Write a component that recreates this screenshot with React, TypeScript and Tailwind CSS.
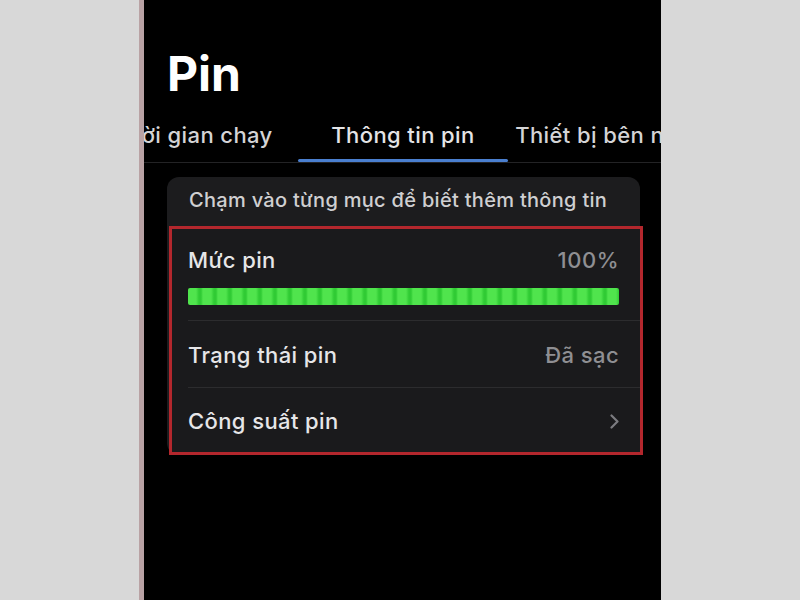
import React from "react";

const font = { fontFamily: 'Inter, "Noto Sans", "DejaVu Sans", sans-serif' };

function Chevron() {
  return (
    <svg width="9" height="15" viewBox="0 0 9 15" fill="none">
      <path d="M1.5 1.5l6 6-6 6" stroke="#7c7c80" strokeWidth="2.2" strokeLinecap="round" strokeLinejoin="round" />
    </svg>
  );
}

export default function App() {
  return (
    <div className="w-[800px] h-[600px] bg-[#d8d8d8] flex overflow-hidden" style={font}>
      <div className="w-[139px] shrink-0" />
      <div className="w-[5px] shrink-0 bg-[#b9a2a4]" />
      <div className="w-[517px] shrink-0 bg-black overflow-hidden flex flex-col">
        <div className="mt-[50px] ml-[23px] text-[48px] leading-none font-bold text-white">Pin</div>

        <div className="mt-[26px] flex ml-[-56px] border-b border-[#232325]">
          <div className="w-[210px] shrink-0 flex flex-col items-center">
            <div className="text-[22px] leading-none font-medium tracking-[0.4px] text-[#d4d4d6] whitespace-nowrap">Thời gian chạy</div>
            <div className="mt-[13px] h-[3px] w-full" />
          </div>
          <div className="w-[210px] shrink-0 flex flex-col items-center">
            <div className="text-[22px] leading-none font-medium tracking-[0.4px] text-[#e4e4e6] whitespace-nowrap">Thông tin pin</div>
            <div className="mt-[13px] h-[3px] w-full rounded-full bg-[#4a7fcf]" />
          </div>
          <div className="w-[210px] shrink-0 flex flex-col items-center">
            <div className="text-[22px] leading-none font-medium tracking-[0.4px] text-[#d4d4d6] whitespace-nowrap">Thiết bị bên ngoài</div>
            <div className="mt-[13px] h-[3px] w-full" />
          </div>
        </div>

        <div className="mt-[14px] ml-[23px] w-[473px] rounded-[12px] bg-[#1c1c1e] flex flex-col">
          <div className="pt-[13px] pl-[22px] text-[20px] leading-none font-medium tracking-[0.3px] text-[#cfcfd1] whitespace-nowrap">
            Chạm vào từng mục để biết thêm thông tin
          </div>

          <div className="mt-[16px] ml-[2px] mr-[-3px] border-[3px] border-[#b3272d] bg-[#1a1a1c] flex flex-col">
            <div className="pt-[20px] pl-[16px] pr-[21px] pb-[15px] flex flex-col">
              <div className="flex justify-between items-start">
                <div className="text-[22px] leading-none font-medium tracking-[0.4px] text-[#e6e6e8]">Mức pin</div>
                <div className="text-[22px] leading-none font-medium tracking-[0.5px] text-[#8f8f93]">100%</div>
              </div>
              <div className="mt-[17px] h-[17px] rounded-[2px] bg-[repeating-linear-gradient(90deg,#50e44d_0px,#50e44d_8px,#30cb34_11px,#30cb34_13px,#50e44d_15px)]" />
            </div>
            <div className="ml-[16px] h-px bg-[#2c2c2e]" />

            <div className="pt-[23px] pb-[21px] pl-[16px] pr-[21px] flex justify-between items-start">
              <div className="text-[22px] leading-none font-medium tracking-[0.4px] text-[#e6e6e8]">Trạng thái pin</div>
              <div className="text-[22px] leading-none font-medium tracking-[0.4px] text-[#8f8f93]">Đã sạc</div>
            </div>
            <div className="ml-[16px] h-px bg-[#2c2c2e]" />

            <div className="pt-[22px] pb-[20px] pl-[16px] pr-[21px] flex justify-between items-center">
              <div className="text-[22px] leading-none font-medium tracking-[0.4px] text-[#e6e6e8]">Công suất pin</div>
              <Chevron />
            </div>
          </div>
        </div>
      </div>
      <div className="flex-1" />
    </div>
  );
}
